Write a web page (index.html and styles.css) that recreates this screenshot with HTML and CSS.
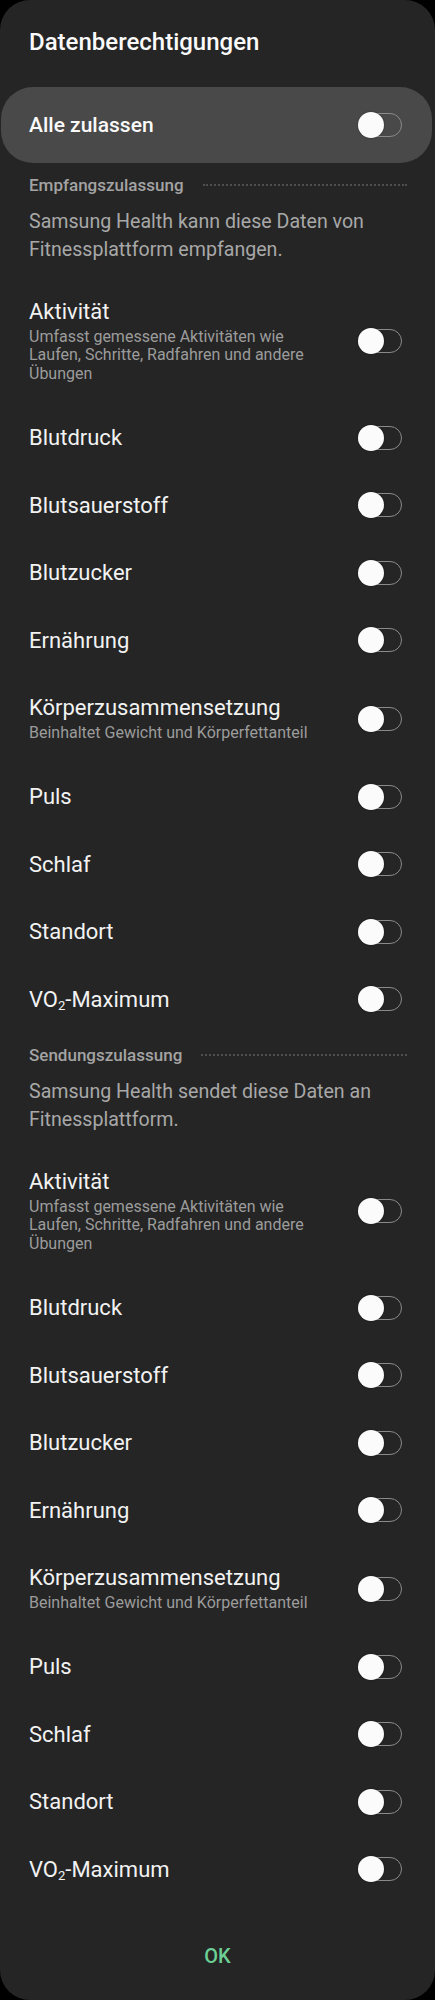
FILE: index.html
```html
<!DOCTYPE html>
<html lang="de">
<head>
<meta charset="utf-8">
<title>Datenberechtigungen</title>
<link rel="stylesheet" href="styles.css">
</head>
<body>
<div class="dialog">
  <h1 class="title">Datenberechtigungen</h1>

  <div class="all-row">
    <span class="all-label">Alle zulassen</span>
    <span class="toggle"></span>
  </div>

  <section class="section">
    <div class="section-head"><span class="section-name">Empfangszulassung</span><span class="dots"></span></div>
    <p class="desc">Samsung Health kann diese Daten von Fitnessplattform empfangen.</p>
    <ul class="list">
      <li class="row"><div class="text"><div class="name">Aktivität</div><div class="sub">Umfasst gemessene Aktivitäten wie Laufen, Schritte, Radfahren und andere Übungen</div></div><span class="toggle"></span></li>
      <li class="row"><div class="text"><div class="name">Blutdruck</div></div><span class="toggle"></span></li>
      <li class="row"><div class="text"><div class="name">Blutsauerstoff</div></div><span class="toggle"></span></li>
      <li class="row"><div class="text"><div class="name">Blutzucker</div></div><span class="toggle"></span></li>
      <li class="row"><div class="text"><div class="name">Ernährung</div></div><span class="toggle"></span></li>
      <li class="row"><div class="text"><div class="name">Körperzusammensetzung</div><div class="sub">Beinhaltet Gewicht und Körperfettanteil</div></div><span class="toggle"></span></li>
      <li class="row"><div class="text"><div class="name">Puls</div></div><span class="toggle"></span></li>
      <li class="row"><div class="text"><div class="name">Schlaf</div></div><span class="toggle"></span></li>
      <li class="row"><div class="text"><div class="name">Standort</div></div><span class="toggle"></span></li>
      <li class="row"><div class="text"><div class="name">VO<sub class="low">2</sub>-Maximum</div></div><span class="toggle"></span></li>
    </ul>
  </section>

  <section class="section">
    <div class="section-head"><span class="section-name">Sendungszulassung</span><span class="dots"></span></div>
    <p class="desc">Samsung Health sendet diese Daten an Fitnessplattform.</p>
    <ul class="list">
      <li class="row"><div class="text"><div class="name">Aktivität</div><div class="sub">Umfasst gemessene Aktivitäten wie Laufen, Schritte, Radfahren und andere Übungen</div></div><span class="toggle"></span></li>
      <li class="row"><div class="text"><div class="name">Blutdruck</div></div><span class="toggle"></span></li>
      <li class="row"><div class="text"><div class="name">Blutsauerstoff</div></div><span class="toggle"></span></li>
      <li class="row"><div class="text"><div class="name">Blutzucker</div></div><span class="toggle"></span></li>
      <li class="row"><div class="text"><div class="name">Ernährung</div></div><span class="toggle"></span></li>
      <li class="row"><div class="text"><div class="name">Körperzusammensetzung</div><div class="sub">Beinhaltet Gewicht und Körperfettanteil</div></div><span class="toggle"></span></li>
      <li class="row"><div class="text"><div class="name">Puls</div></div><span class="toggle"></span></li>
      <li class="row"><div class="text"><div class="name">Schlaf</div></div><span class="toggle"></span></li>
      <li class="row"><div class="text"><div class="name">Standort</div></div><span class="toggle"></span></li>
      <li class="row"><div class="text"><div class="name">VO<sub class="low">2</sub>-Maximum</div></div><span class="toggle"></span></li>
    </ul>
  </section>

  <div class="footer"><span class="ok">OK</span></div>
</div>
</body>
</html>
```

FILE: styles.css
```css
* { box-sizing: border-box; }

html, body {
  margin: 0;
  padding: 0;
  background: #000;
}

body {
  font-family: Roboto, "Liberation Sans", Arial, sans-serif;
  color: #f4f4f4;
}

.dialog {
  width: 435px;
  height: 2000px;
  background: #252525;
  border-radius: 30px;
  padding-top: 27px;
  display: flex;
  flex-direction: column;
  overflow: hidden;
}

.title {
  margin: 0;
  padding: 0 30px 0 29px;
  font-size: 24px;
  font-weight: 500;
  line-height: 30px;
  color: #fafafa;
}

.all-row {
  margin: 30px 3px 0 1px;
  height: 76px;
  border-radius: 32px;
  background: #494949;
  display: flex;
  align-items: center;
  padding: 0 30px 0 28px;
}

.all-label {
  flex: 1;
  font-size: 21px;
  font-weight: 500;
  color: #fafafa;
}

.toggle {
  position: relative;
  flex: none;
  width: 44px;
  height: 24px;
  border: 1.5px solid #8a8a8a;
  border-radius: 12px;
}

.toggle::before {
  content: "";
  position: absolute;
  left: -1.5px;
  top: 50%;
  width: 26px;
  height: 26px;
  margin-top: -13px;
  border-radius: 50%;
  background: #fbfbfb;
  box-shadow: 0 0 1.5px rgba(0, 0, 0, 0.6);
}

.section {
  margin-top: 12px;
}

.section + .section {
  margin-top: 12px;
}

.section-head {
  display: flex;
  align-items: center;
  height: 20px;
  padding-left: 29px;
  padding-right: 28px;
}

.section-name {
  font-size: 17px;
  font-weight: 500;
  color: #a3a3a3;
  line-height: 20px;
}

.dots {
  flex: 1;
  margin-left: 19px;
  height: 0;
  border-top: 2px dotted #4f4f4f;
}

.desc {
  margin: 13px 0 0;
  padding: 0 33px 0 29px;
  font-size: 19.6px;
  line-height: 28px;
  color: #a8a8a8;
}

.list {
  list-style: none;
  margin: 14px 0 0;
  padding: 0;
}

.row {
  display: flex;
  align-items: center;
  padding: 21px 33px 21px 29px;
}

.text {
  flex: 1;
  padding-right: 28px;
}

.name {
  font-size: 22px;
  line-height: 25.5px;
  color: #f2f2f2;
}

.low {
  font-size: 13px;
  vertical-align: -3px;
  line-height: 0;
}

.sub {
  margin-top: 3px;
  font-size: 16px;
  line-height: 18.5px;
  color: #9c9c9c;
}

.footer {
  padding-top: 41px;
  text-align: center;
}

.ok {
  font-size: 20px;
  font-weight: 500;
  line-height: 24px;
  color: #6ccf95;
}
```
